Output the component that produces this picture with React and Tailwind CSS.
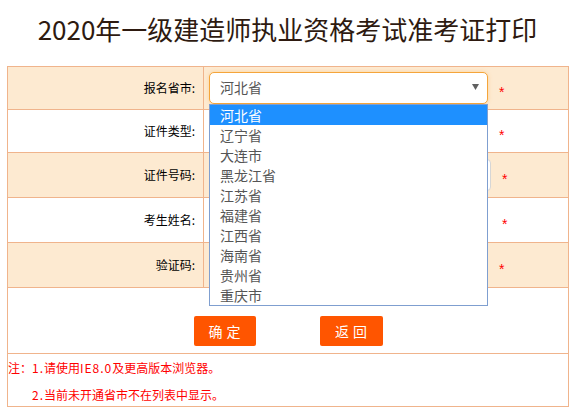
import React from 'react';

const font = { fontFamily: '"Noto Sans CJK SC", "Noto Sans", sans-serif' };

const provinces = ['河北省', '辽宁省', '大连市', '黑龙江省', '江苏省', '福建省', '江西省', '海南省', '贵州省', '重庆市'];

function Star({ offset = 'ml-[11px]' }) {
  return (
    <span className={`${offset} mt-[8px] text-[14px] leading-none text-[#ff0000]`} style={{ fontFamily: '"Liberation Sans", sans-serif' }}>
      *
    </span>
  );
}

function Row({ label, tone, height, children }) {
  return (
    <div className={`flex border-b border-[#f0b48c] ${tone ? 'bg-[#fdead1]' : 'bg-white'} ${height}`}>
      <div className="w-[196px] flex items-center justify-end pr-[8px] border-r border-[#f0b48c] text-[12px] text-black">
        {label}
      </div>
      <div className="flex-1 flex items-center pl-[5px]">{children}</div>
    </div>
  );
}

export default function App() {
  return (
    <div className="w-[583px] h-[415px] bg-white overflow-hidden" style={font}>
      {/* Title */}
      <div className="h-[66px] flex justify-center pt-[11px]">
        <h1 className="text-[26px] leading-[36px] text-[#2e1a10] ml-[-8px]">2020年一级建造师执业资格考试准考证打印</h1>
      </div>

      <div className="ml-[7px] w-[562px] border border-[#f0b48c]">
        {/* Province select with open list */}
        <Row label="报名省市:" tone height="h-[43px]">
          <div className="relative mt-[-1px]">
            <div className="w-[279px] h-[32px] flex items-center justify-between pl-[10px] pr-[7px] bg-white border border-[#f5a53a] rounded-[5px] shadow-[0_0_4px_rgba(245,165,58,0.35)] text-[14px] text-[#555]">
              <span>河北省</span>
              <svg width="7" height="6" viewBox="0 0 7 6" className="mr-[1px] mt-[-2px]"><path d="M0 0h7L3.5 6z" fill="#606060" /></svg>
            </div>
            <div className="absolute left-0 top-[32px] z-10 w-[279px] bg-white border border-[#7f9fd0]">
              {provinces.map((p, i) => (
                <div
                  key={p}
                  className={`h-[20px] leading-[20px] pl-[10px] text-[14px] ${i === 0 ? 'bg-[#1e90ff] text-white' : 'text-[#555]'}`}
                >
                  {p}
                </div>
              ))}
            </div>
          </div>
          <Star />
        </Row>

        <Row label="证件类型:" height="h-[43px]">
          <div className="w-[279px] h-[32px] border border-[#ccc] rounded-[4px] bg-white" />
          <Star />
        </Row>

        <Row label="证件号码:" tone height="h-[45px]">
          <div className="w-[282px] h-[32px] mt-[-1px] border border-[#d6d6d6] rounded-[4px] bg-white" />
          <Star />
        </Row>

        <Row label="考生姓名:" height="h-[45px]">
          <div className="w-[279px] h-[32px] border border-[#ccc] rounded-[4px] bg-white" />
          <Star offset="ml-[14px]" />
        </Row>

        <Row label="验证码:" tone height="h-[45px]">
          <div className="w-[279px] h-[32px] border border-[#ccc] rounded-[4px] bg-white" />
          <Star />
        </Row>

        {/* Buttons */}
        <div className="h-[66px] border-b border-[#f0b48c] flex justify-center gap-[64px] pt-[28px]">
          <button className="w-[62px] h-[30px] pl-[4px] bg-[#ff5500] rounded-[2px] text-white text-[14px] tracking-[4px]">确定</button>
          <button className="w-[63px] h-[30px] pl-[4px] bg-[#ff5500] rounded-[2px] text-white text-[14px] tracking-[4px]">返回</button>
        </div>

        {/* Notes */}
        <div className="h-[52px] text-[12px] leading-[27px] text-[#ff0000]">
          <p>
            注：<span className="tracking-[1px]">1.</span>请使用<span className="tracking-[1px]">IE8.0</span>及更高版本浏览器。
          </p>
          <p className="pl-[24px]">
            <span className="tracking-[1px]">2.</span>当前未开通省市不在列表中显示。
          </p>
        </div>
      </div>
    </div>
  );
}
